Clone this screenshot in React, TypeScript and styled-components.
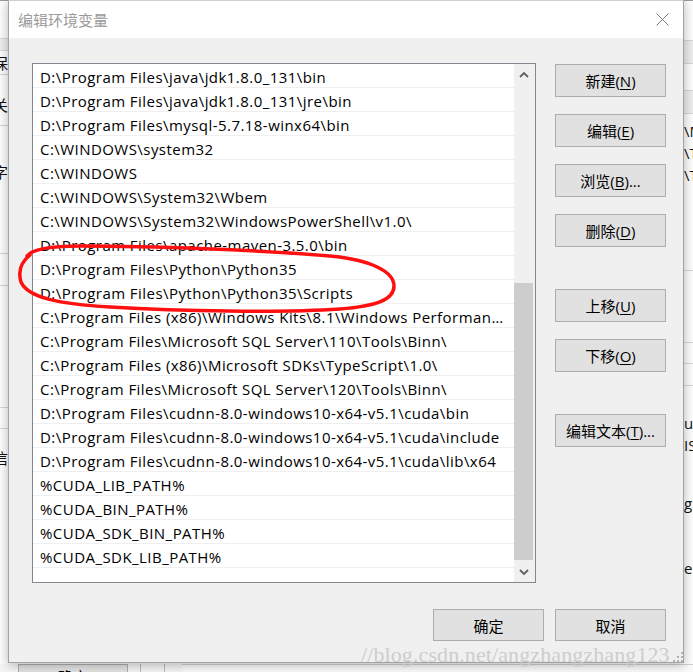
import React from "react";
import styled, { createGlobalStyle } from "styled-components";

const GlobalStyle = createGlobalStyle`
  html, body { margin: 0; padding: 0; background: #ffffff; overflow: hidden; }
  * { box-sizing: border-box; }
`;

const UI_FONT = `"Open Sans", "Noto Sans CJK SC", sans-serif`;

const Desktop = styled.div`
  position: relative;
  width: 693px;
  height: 672px;
  overflow: hidden;
  background: #fbfbfb;
  font-family: ${UI_FONT};
`;

/* ---------- background window (behind the dialog) ---------- */
const BackWindow = styled.div`
  position: absolute;
  inset: 0;
  display: grid;
  grid-template-columns: 10px 1fr 11px;
  grid-template-rows: 663px 1fr;
  border-top: 1px solid #9a9a9a;
`;

const Strip = styled.div<{ $align?: "left" | "right" }>`
  display: flex;
  flex-direction: column;
  overflow: hidden;
  background: #fcfcfc;
  align-items: ${(p) => (p.$align === "right" ? "flex-start" : "flex-end")};
`;

const Cell = styled.div<{ $h?: number; $pad?: number; $band?: boolean; $line?: boolean }>`
  width: 100%;
  ${(p) => (p.$h ? `height: ${p.$h}px;` : "flex: 1;")}
  padding-top: ${(p) => p.$pad ?? 0}px;
  background: ${(p) => (p.$band ? "#ececec" : "transparent")};
  border-bottom: ${(p) => (p.$line === false ? "none" : "1px solid #d6d6d6")};
  display: flex;
  flex-direction: column;
  font-size: 15px;
  line-height: 22px;
  color: #111;
  white-space: nowrap;
`;

const LeftGlyph = styled.span`
  margin-left: -7px;
`;

const RightGlyph = styled.span`
  margin-left: 2px;
`;

const Spacer = styled.div<{ $h?: number }>`
  height: ${(p) => p.$h ?? 0}px;
`;

const BottomStrip = styled.div`
  grid-column: 1 / span 3;
  display: flex;
  background: #f4f4f4;
`;

const BgButton = styled.div`
  margin-left: 18px;
  width: 110px;
  height: 30px;
  background: #e1e1e1;
  border: 1px solid #adadad;
  display: flex;
  justify-content: center;
  padding-top: 2px;
  font-size: 15px;
  line-height: 20px;
  color: #000;
  font-family: "Noto Sans CJK SC", sans-serif;
`;

const BgDivider = styled.div<{ $gap: number }>`
  margin-left: ${(p) => p.$gap}px;
  width: 1px;
  background: #b8b8b8;
`;

const BgPane = styled.div`
  flex: 1;
  margin-left: 17px;
  border-top: 1px solid #d0d0d0;
  background: #fafafa;
`;

/* ---------- dialog ---------- */
const Dialog = styled.div`
  position: absolute;
  left: 8px;
  top: 0;
  width: 676px;
  height: 663px;
  border: 1px solid #a3a3a3;
  border-top-color: #d0d0d0;
  box-shadow: 0 2px 10px rgba(0, 0, 0, 0.28);
  display: flex;
  flex-direction: column;
  background: #f0f0f0;
`;

const TitleBar = styled.div`
  height: 37px;
  background: #ffffff;
  display: flex;
  align-items: center;
  justify-content: space-between;
  padding: 0 14px 0 9px;
`;

const Title = styled.span`
  font-size: 15px;
  color: #9a9a9a;
  font-family: "Noto Sans CJK SC", sans-serif;
  line-height: 20px;
`;

const CloseBtn = styled.div`
  width: 14px;
  height: 14px;
  display: flex;
  align-items: center;
  justify-content: center;
`;

const Body = styled.div`
  flex: 1;
  display: grid;
  grid-template-columns: 504px 111px;
  grid-template-rows: 520px auto;
  column-gap: 19px;
  row-gap: 26px;
  padding: 25px 17px 0 23px;
`;

const ListBox = styled.div`
  border: 1px solid #828790;
  background: #ffffff;
  display: flex;
  overflow: hidden;
`;

const Rows = styled.div`
  flex: 1;
  min-width: 0;
  display: flex;
  flex-direction: column;
`;

const Row = styled.div`
  height: 24px;
  border-bottom: 1px solid #efefef;
  padding: 3px 6px 0 7px;
  font-size: 15px;
  letter-spacing: 0.45px;
  line-height: 20px;
  color: #000;
  white-space: nowrap;
  overflow: hidden;
  text-overflow: ellipsis;
`;

const ScrollBar = styled.div`
  width: 21px;
  flex-shrink: 0;
  background: #f0f0f0;
  padding-right: 2px;
  display: flex;
  flex-direction: column;
`;

const ArrowBtn = styled.div`
  height: 20px;
  display: flex;
  align-items: center;
  justify-content: center;
`;

const Track = styled.div`
  flex: 1;
  display: flex;
  flex-direction: column;
`;

const Thumb = styled.div<{ $top: number; $h: number }>`
  margin-top: ${(p) => p.$top}px;
  height: ${(p) => p.$h}px;
  background: #cdcdcd;
`;

const SideButtons = styled.div`
  display: flex;
  flex-direction: column;
  padding-top: 1px;
`;

const Button = styled.div<{ $gap?: number }>`
  margin-top: ${(p) => p.$gap ?? 0}px;
  width: 111px;
  height: 33px;
  background: #e1e1e1;
  border: 1px solid #adadad;
  display: flex;
  align-items: center;
  justify-content: center;
  font-size: 15px;
  color: #000;
  font-family: ${UI_FONT};
  white-space: nowrap;

  u {
    text-underline-offset: 2px;
  }
`;

const Footer = styled.div`
  grid-column: 1 / span 2;
  display: flex;
  justify-content: flex-end;
  gap: 11px;
`;

const FooterButton = styled(Button)`
  height: 32px;
`;

/* ---------- overlays ---------- */
const Annotation = styled.svg`
  position: absolute;
  left: 0;
  top: 0;
  pointer-events: none;
`;

const Watermark = styled.div`
  position: absolute;
  left: 361px;
  top: 642px;
  font-family: "Liberation Serif", serif;
  font-size: 22px;
  line-height: 26px;
  color: #cdcdcd;
  letter-spacing: 0.1px;
  white-space: nowrap;
  pointer-events: none;
`;

const Grip = styled.svg`
  position: absolute;
  left: 673px;
  top: 652px;
`;

const paths = [
  "D:\\Program Files\\java\\jdk1.8.0_131\\bin",
  "D:\\Program Files\\java\\jdk1.8.0_131\\jre\\bin",
  "D:\\Program Files\\mysql-5.7.18-winx64\\bin",
  "C:\\WINDOWS\\system32",
  "C:\\WINDOWS",
  "C:\\WINDOWS\\System32\\Wbem",
  "C:\\WINDOWS\\System32\\WindowsPowerShell\\v1.0\\",
  "D:\\Program Files\\apache-maven-3.5.0\\bin",
  "D:\\Program Files\\Python\\Python35",
  "D:\\Program Files\\Python\\Python35\\Scripts",
  "C:\\Program Files (x86)\\Windows Kits\\8.1\\Windows Performance Toolkit\\",
  "C:\\Program Files\\Microsoft SQL Server\\110\\Tools\\Binn\\",
  "C:\\Program Files (x86)\\Microsoft SDKs\\TypeScript\\1.0\\",
  "C:\\Program Files\\Microsoft SQL Server\\120\\Tools\\Binn\\",
  "D:\\Program Files\\cudnn-8.0-windows10-x64-v5.1\\cuda\\bin",
  "D:\\Program Files\\cudnn-8.0-windows10-x64-v5.1\\cuda\\include",
  "D:\\Program Files\\cudnn-8.0-windows10-x64-v5.1\\cuda\\lib\\x64",
  "%CUDA_LIB_PATH%",
  "%CUDA_BIN_PATH%",
  "%CUDA_SDK_BIN_PATH%",
  "%CUDA_SDK_LIB_PATH%",
];

const sideButtons: { label: string; key: string; suffix?: string; gap: number }[] = [
  { label: "新建", key: "N", gap: 0 },
  { label: "编辑", key: "E", gap: 17 },
  { label: "浏览", key: "B", suffix: "...", gap: 17 },
  { label: "删除", key: "D", gap: 17 },
  { label: "上移", key: "U", gap: 42 },
  { label: "下移", key: "O", gap: 17 },
  { label: "编辑文本", key: "T", suffix: "...", gap: 42 },
];

const Chevron = ({ up }: { up: boolean }) => (
  <svg width="10" height="7" viewBox="0 0 10 7">
    <path
      d={up ? "M1 6 L5 2 L9 6" : "M1 1 L5 5 L9 1"}
      fill="none"
      stroke="#606060"
      strokeWidth="1.8"
    />
  </svg>
);

export default function App() {
  return (
    <>
      <GlobalStyle />
      <Desktop>
        <BackWindow>
          <Strip>
            <Cell $h={38} />
            <Cell $h={12} $band />
            <Cell $h={24} $pad={1}>
              <LeftGlyph>保</LeftGlyph>
            </Cell>
            <Cell $h={51} $pad={19}>
              <LeftGlyph>关</LeftGlyph>
            </Cell>
            <Cell $h={128} $pad={35}>
              <LeftGlyph>字</LeftGlyph>
            </Cell>
            <Cell $h={32} />
            <Cell $h={122} />
            <Cell $h={21} />
            <Cell $pad={18} $line={false}>
              <LeftGlyph>信</LeftGlyph>
            </Cell>
          </Strip>
          <Spacer />
          <Strip $align="right">
            <Cell $h={40} />
            <Cell $h={23} $band />
            <Cell $h={27} />
            <Cell $h={23} $band />
            <Cell $h={157} $pad={6}>
              <RightGlyph>\M</RightGlyph>
              <RightGlyph>\T</RightGlyph>
              <RightGlyph>\T</RightGlyph>
            </Cell>
            <Cell $h={72} />
            <Cell $h={21} />
            <Cell $h={22} />
            <Cell $pad={26} $line={false}>
              <RightGlyph>ut</RightGlyph>
              <RightGlyph>IS</RightGlyph>
              <Spacer $h={36} />
              <RightGlyph>g</RightGlyph>
              <Spacer $h={43} />
              <RightGlyph>el</RightGlyph>
            </Cell>
          </Strip>
          <BottomStrip>
            <BgButton>确定</BgButton>
            <BgDivider $gap={12} />
            <BgDivider $gap={23} />
            <BgPane />
          </BottomStrip>
        </BackWindow>

        <Dialog>
          <TitleBar>
            <Title>编辑环境变量</Title>
            <CloseBtn>
              <svg width="13" height="13" viewBox="0 0 13 13">
                <path d="M0.5 0.5 L12.5 12.5 M12.5 0.5 L0.5 12.5" stroke="#7a7a7a" strokeWidth="1" />
              </svg>
            </CloseBtn>
          </TitleBar>
          <Body>
            <ListBox>
              <Rows>
                {paths.map((p) => (
                  <Row key={p}>{p}</Row>
                ))}
              </Rows>
              <ScrollBar>
                <ArrowBtn>
                  <Chevron up />
                </ArrowBtn>
                <Track>
                  <Thumb $top={199} $h={277} />
                </Track>
                <ArrowBtn>
                  <Chevron up={false} />
                </ArrowBtn>
              </ScrollBar>
            </ListBox>
            <SideButtons>
              {sideButtons.map((b) => (
                <Button key={b.key} $gap={b.gap}>
                  {b.label}(<u>{b.key}</u>){b.suffix ?? ""}
                </Button>
              ))}
            </SideButtons>
            <Footer>
              <FooterButton>确定</FooterButton>
              <FooterButton>取消</FooterButton>
            </Footer>
          </Body>
        </Dialog>

        <Annotation width="693" height="672" viewBox="0 0 693 672">
          <path
            d="M27 256 C 33 248, 55 246, 80 246 C 150 246, 260 250, 330 256 C 372 260, 394 272, 394 286 C 394 300, 376 306, 340 309 C 280 313, 180 311, 110 307 C 60 304, 28 298, 21 282 C 18 272, 20 263, 30 255"
            fill="none"
            stroke="#ff1010"
            strokeWidth="3.5"
            strokeLinecap="round"
          />
        </Annotation>

        <Watermark>//blog.csdn.net/angzhangzhang123</Watermark>
        <Grip width="12" height="12" viewBox="0 0 12 12">
          <g fill="#b0b0b0">
            <rect x="8" y="0" width="2" height="2" />
            <rect x="4" y="4" width="2" height="2" />
            <rect x="8" y="4" width="2" height="2" />
            <rect x="0" y="8" width="2" height="2" />
            <rect x="4" y="8" width="2" height="2" />
            <rect x="8" y="8" width="2" height="2" />
          </g>
        </Grip>
      </Desktop>
    </>
  );
}
